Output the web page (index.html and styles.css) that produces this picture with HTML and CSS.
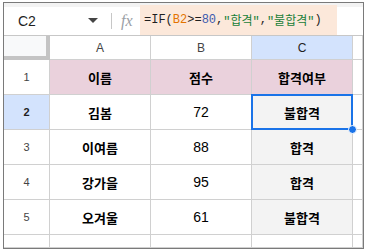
FILE: index.html
```html
<!DOCTYPE html>
<html lang="ko">
<head>
<meta charset="utf-8">
<link rel="stylesheet" href="styles.css">
</head>
<body>
<div class="frame">
  <div class="topband"></div>
  <div class="fbar">
    <div class="namebox">C2</div>
    <svg class="caret" width="10" height="6" viewBox="0 0 10 6"><path d="M0 0 L10 0 L5 5 Z" fill="#444"/></svg>
    <div class="sep"></div>
    <div class="fx">fx</div>
    <div class="formula"><span class="k">=IF(</span><span class="ref">B2</span><span class="k">&gt;=</span><span class="num">80</span><span class="k">,</span><span class="str">"합격"</span><span class="k">,</span><span class="str">"불합격"</span><span class="k">)</span></div>
  </div>
  <div class="grid">
    <div class="c corner"></div>
    <div class="c ch">A</div>
    <div class="c ch">B</div>
    <div class="c ch sel">C</div>
    <div class="c ch"></div>

    <div class="c rh">1</div>
    <div class="c hd b">이름</div>
    <div class="c hd b">점수</div>
    <div class="c hd b">합격여부</div>
    <div class="c"></div>

    <div class="c rh sel">2</div>
    <div class="c b">김봄</div>
    <div class="c">72</div>
    <div class="c g b active">불합격<span class="handle"></span></div>
    <div class="c"></div>

    <div class="c rh">3</div>
    <div class="c b">이여름</div>
    <div class="c">88</div>
    <div class="c g b">합격</div>
    <div class="c"></div>

    <div class="c rh">4</div>
    <div class="c b">강가을</div>
    <div class="c">95</div>
    <div class="c g b">합격</div>
    <div class="c"></div>

    <div class="c rh">5</div>
    <div class="c b">오겨울</div>
    <div class="c">61</div>
    <div class="c g b">불합격</div>
    <div class="c"></div>

    <div class="c rh"></div>
    <div class="c"></div>
    <div class="c"></div>
    <div class="c"></div>
    <div class="c"></div>
  </div>
</div>
</body>
</html>
```

FILE: styles.css
```css
* { box-sizing: border-box; }
html, body { margin: 0; padding: 0; background: #fff; }
body {
  font-family: "Liberation Sans", Arial, "Noto Sans CJK KR", sans-serif;
  color: #000;
}
.frame {
  margin: 2px 0 0 3px;
  width: 361px;
  height: 247px;
  border: 1px solid #7a7a7a;
  display: flex;
  flex-direction: column;
  overflow: hidden;
}
.topband { height: 4px; background: #f3f3f3; }
.fbar {
  height: 29px;
  border-bottom: 1px solid #c7c7c7;
  display: flex;
  align-items: center;
  position: relative;
}
.namebox {
  width: 82px;
  padding-left: 14px;
  font-size: 14px;
  color: #1f1f1f;
}
.caret { margin-left: 2px; }
.sep {
  width: 1px;
  height: 16px;
  background: #c7c7c7;
  margin-left: 13px;
}
.fx {
  font-family: "Liberation Serif", serif;
  font-style: italic;
  font-size: 16px;
  color: #9aa0a6;
  margin-left: 9px;
  width: 19px;
}
.formula {
  align-self: stretch;
  margin-top: -2px;
  width: 197px;
  background: #fce8da;
  padding-left: 4px;
  display: flex;
  align-items: center;
  font-family: "Liberation Mono", "Noto Sans CJK KR", monospace;
  font-size: 12px;
  white-space: pre;
  color: #1f1f1f;
}
.ref { color: #e37400; }
.num { color: #3c5bb0; }
.str { color: #188038; }
.grid {
  flex: 1;
  display: grid;
  grid-template-columns: 46px 101px 101px 101px 10px;
  grid-template-rows: 24px 35px 35px 35px 35px 35px 1fr;
}
.c {
  border-right: 1px solid #d0d0d0;
  border-bottom: 1px solid #d0d0d0;
  display: flex;
  align-items: center;
  justify-content: center;
  font-size: 14px;
  position: relative;
}
.corner {
  background: #f8f9fa;
  border-right: 4px solid #c4c4c4;
  border-bottom: 4px solid #c4c4c4;
}
.ch { font-size: 12px; color: #444; }
.rh { font-size: 11px; color: #444; }
.sel { background: #d3e3fd; color: #0b57d0; font-weight: bold; }
.ch.sel { font-weight: normal; color: #1f1f1f; }
.rh.sel { color: #1f1f1f; }
.hd { background: #ead1dc; }
.b { font-family: "Noto Sans CJK KR", sans-serif; font-weight: bold; font-size: 13px; }
.g { background: #f3f3f3; }
.active::after {
  content: "";
  position: absolute;
  left: -1px; top: -1px; right: -1px; bottom: -1px;
  border: 2px solid #1a73e8;
}
.handle {
  position: absolute;
  width: 9px; height: 9px;
  right: -5px; bottom: -5px;
  border-radius: 50%;
  background: #1a73e8;
  border: 1px solid #fff;
  z-index: 2;
}
```
